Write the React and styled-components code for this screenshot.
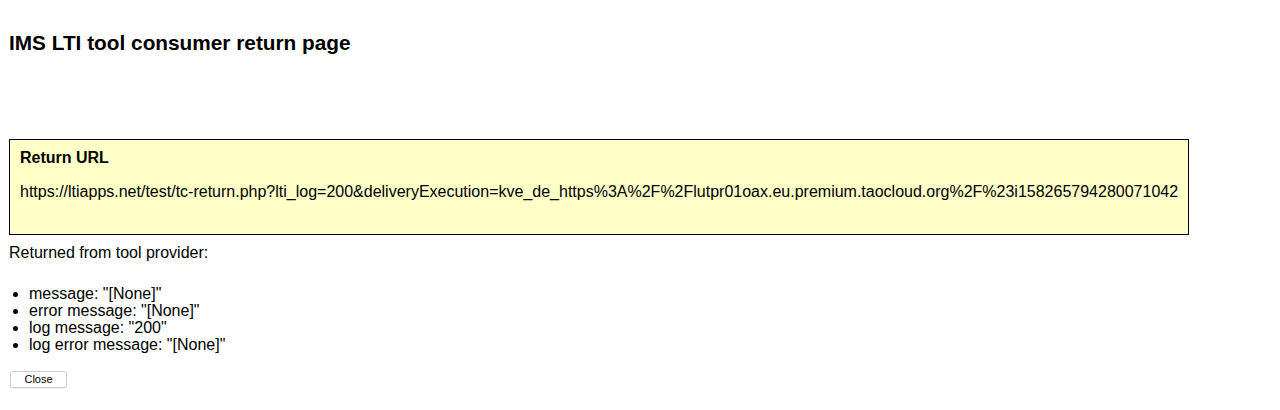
import React from 'react';
import styled, { createGlobalStyle } from 'styled-components';

const Global = createGlobalStyle`
  body {
    margin: 0;
    background: #ffffff;
    color: #000000;
    font-family: "Liberation Sans", Arial, sans-serif;
    font-size: 16px;
  }
`

const Page = styled.div`
  padding: 32px 8px 20px 8px;
`

const Title = styled.h3`
  margin: 0;
  font-size: 20.8px;
  line-height: 22px;
  font-weight: bold;
  padding-left: 1px;
`

const ReturnBox = styled.div`
  margin: 85px 0 0 1px;
  width: 1158px;
  padding: 9px 10px 33px 10px;
  border: 1px solid #000000;
  background: #ffffc8;
`

const BoxTitle = styled.div`
  font-weight: bold;
  font-size: 16px;
  line-height: 18px;
`

const Url = styled.div`
  margin-top: 16px;
  font-size: 16px;
  line-height: 18px;
  white-space: nowrap;
`

const Text = styled.p`
  margin: 9px 0 0 0;
  line-height: 18px;
  padding-left: 1px;
`

const List = styled.ul`
  margin: 23px 0 0 0;
  padding-left: 21px;
  line-height: 17px;
`

const Item = styled.li`
  font-size: 16px;
`

const Button = styled.button`
  margin: 18px 0 0 2px;
  width: 57px;
  height: 17px;
  padding: 0;
  font-family: "Liberation Sans", Arial, sans-serif;
  font-size: 11px;
  line-height: 15px;
  color: #000000;
  background: #ffffff;
  border: 1px solid #cfcfcf;
  border-radius: 3px;
  box-shadow: 0 1px 1px rgba(0, 0, 0, 0.08);
  display: block;
`

const items = [
  'message: "[None]"',
  'error message: "[None]"',
  'log message: "200"',
  'log error message: "[None]"',
];

function App() {
  return (
    <Page>
      <Global />
      <Title>IMS LTI tool consumer return page</Title>
      <ReturnBox>
        <BoxTitle>Return URL</BoxTitle>
        <Url>https://ltiapps.net/test/tc-return.php?lti_log=200&amp;deliveryExecution=kve_de_https%3A%2F%2Flutpr01oax.eu.premium.taocloud.org%2F%23i158265794280071042</Url>
      </ReturnBox>
      <Text>Returned from tool provider:</Text>
      <List>
        {items.map((t) => (
          <Item key={t}>{t}</Item>
        ))}
      </List>
      <Button>Close</Button>
    </Page>
  );
}

export default App;
